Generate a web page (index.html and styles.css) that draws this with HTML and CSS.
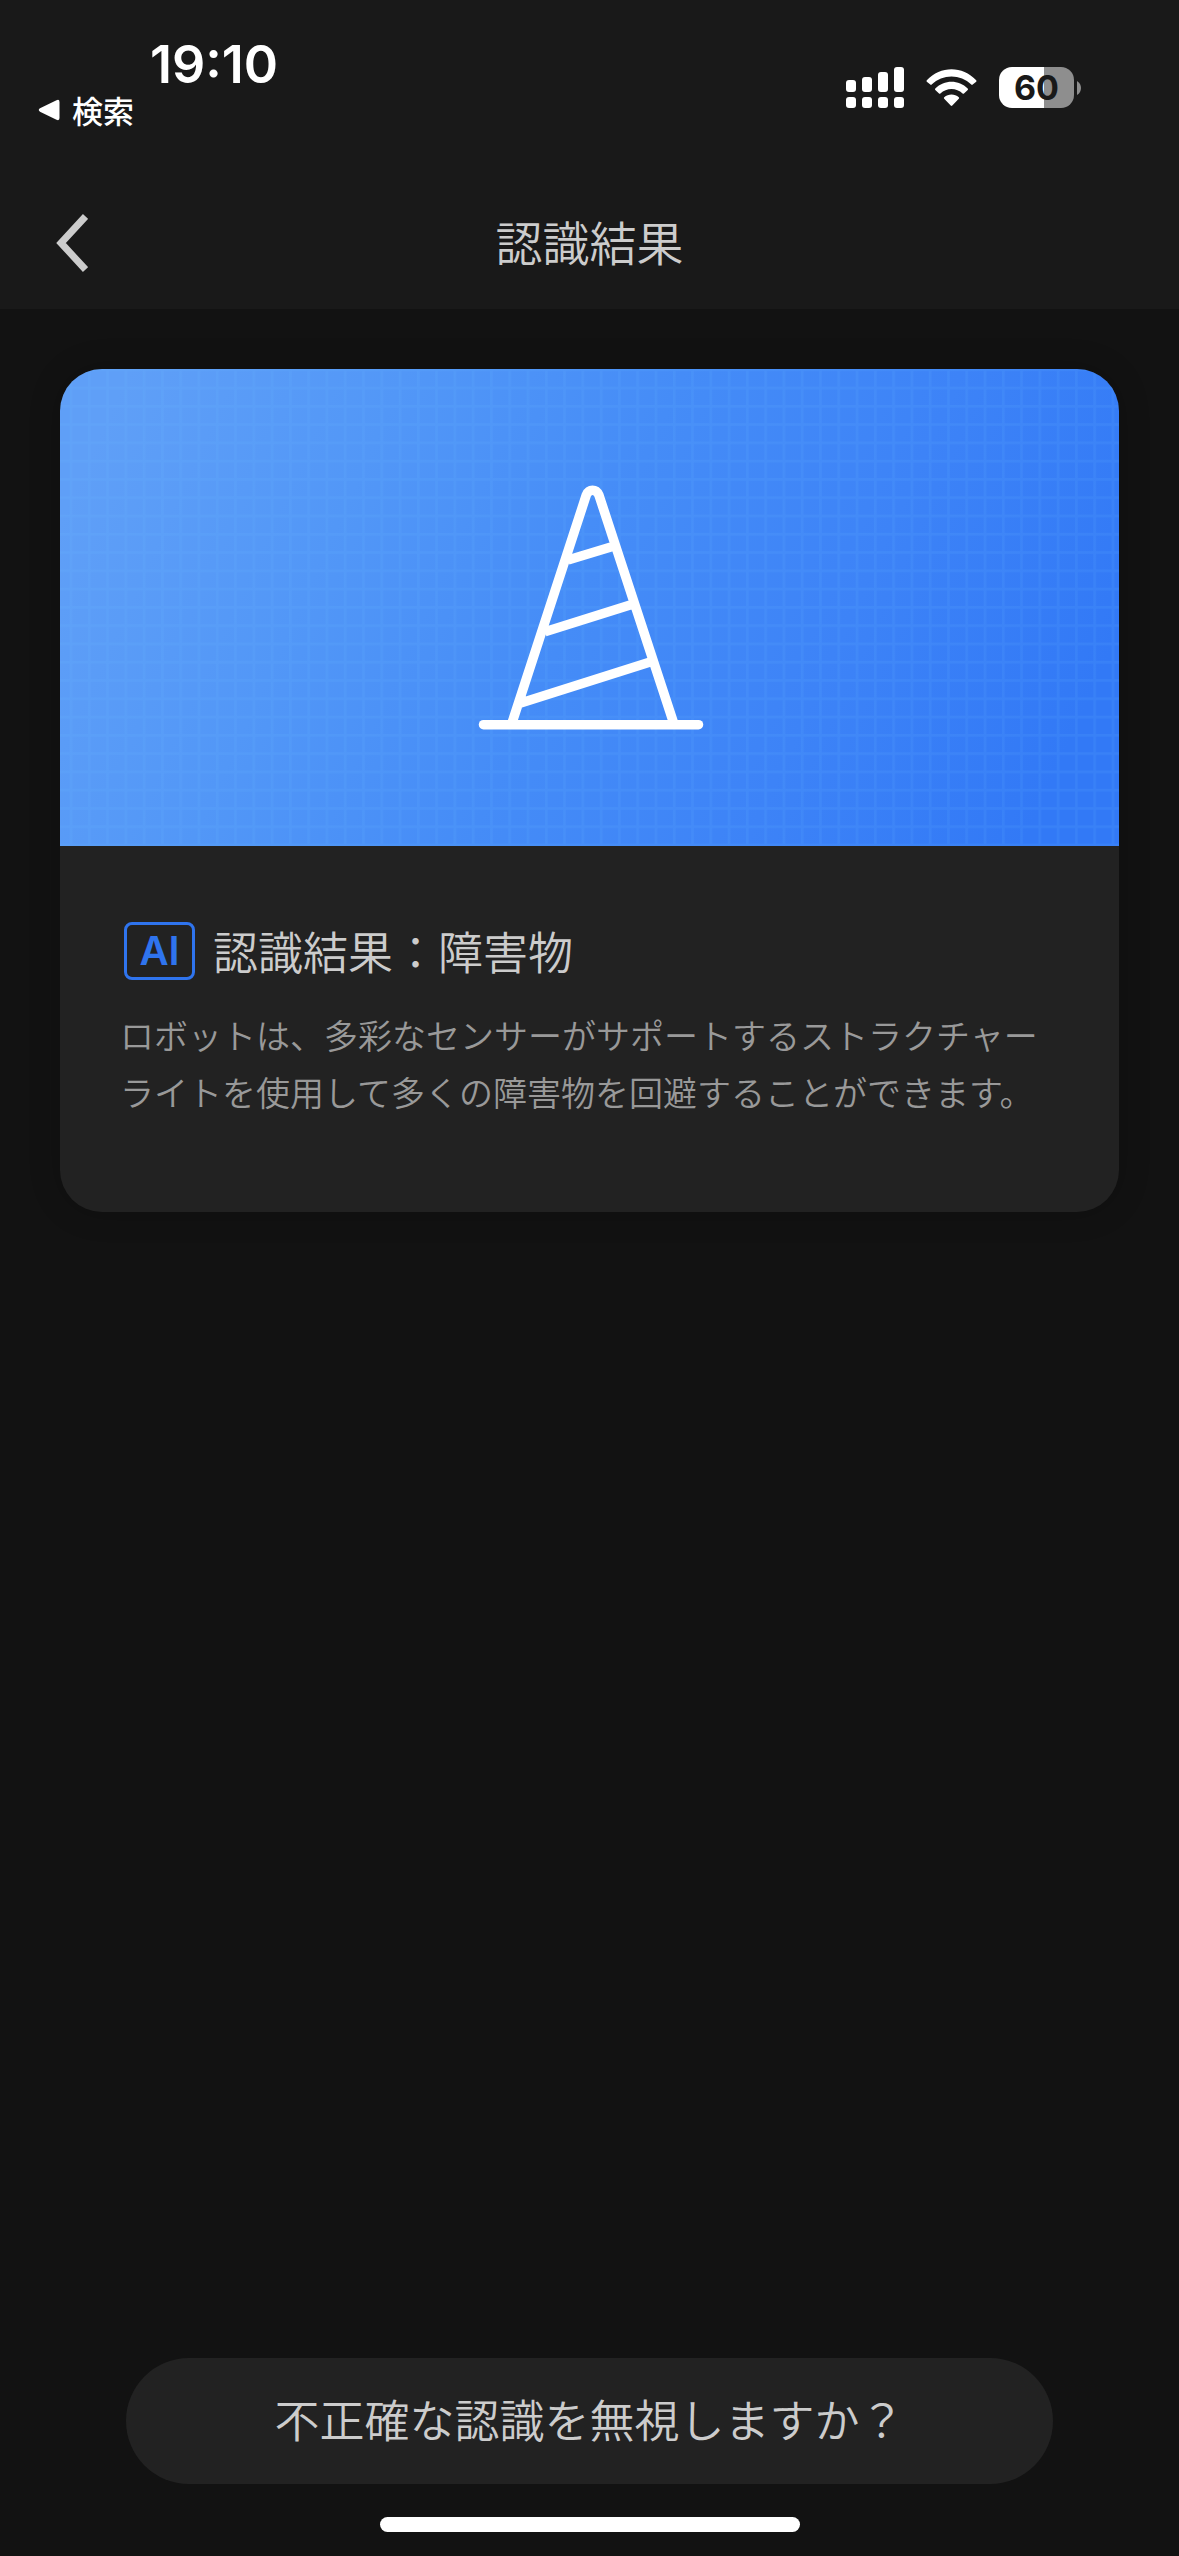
FILE: index.html
```html
<!DOCTYPE html>
<html lang="ja">
<head>
<meta charset="utf-8">
<meta name="viewport" content="width=device-width, initial-scale=1">
<title>認識結果</title>
<link rel="stylesheet" href="styles.css">
</head>
<body>
<header class="top">
  <div class="status">
    <div class="status-left">
      <time class="clock">19:10</time>
      <a class="return" href="#">
        <svg width="22" height="22" viewBox="0 0 22 22" aria-hidden="true"><path d="M2 9.300 18.500 1.200Q21.500 0 21.500 3V19Q21.500 22 18.500 20.800L2 12.700Q-.5 11 2 9.300Z" fill="#fff"/></svg>
        <span>検索</span>
      </a>
    </div>
    <div class="status-right">
      <svg width="58" height="41" viewBox="0 0 58 41" fill="#fff" aria-hidden="true">
        <rect x="0" y="13" width="10" height="12" rx="3"/><rect x="16" y="10" width="10" height="15" rx="3"/><rect x="32" y="5" width="10" height="20" rx="3"/><rect x="48" y="0" width="10" height="25" rx="3"/>
        <rect x="0" y="30" width="10" height="11" rx="3"/><rect x="16" y="30" width="10" height="11" rx="3"/><rect x="32" y="30" width="10" height="11" rx="3"/><rect x="48" y="30" width="10" height="11" rx="3"/>
      </svg>
      <svg width="51" height="41" viewBox="0 0 51 41" fill="#fff" aria-hidden="true">
        <path d="M.8 13.2C14.500-1.500 36.500-1.500 50.200 13.200Q50.800 14 50.200 14.700L46.700 17.600Q46 18.200 45.300 17.600C34.500 6.800 16.500 6.800 5.700 17.600Q5 18.200 4.300 17.600L.8 14.700Q.2 14 .8 13.200Z"/>
        <path d="M9.300 21.600C18.200 12.500 32.800 12.500 41.700 21.600Q42.400 22.400 41.700 23.100L38 26.500Q37.300 27.100 36.600 26.500C30.500 20.500 20.500 20.500 14.400 26.500Q13.700 27.100 13 26.500L9.300 23.100Q8.600 22.400 9.300 21.600Z"/>
        <path d="M18.200 30.200C22.300 26.600 28.700 26.600 32.800 30.200Q33.500 31 32.800 31.700L26.300 38.600Q25.500 39.300 24.700 38.600L18.200 31.700Q17.500 31 18.200 30.200Z"/>
      </svg>
      <div class="battery">
        <span class="battery-level">60</span>
        <svg width="4" height="14" viewBox="0 0 4 14" aria-hidden="true"><path d="M0 0Q4 2.500 4 7T0 14Z" fill="#8e8e8e"/></svg>
      </div>
    </div>
  </div>
  <nav class="bar">
    <button class="back" type="button" aria-label="戻る">
      <svg width="32" height="60" viewBox="0 0 32 60" fill="none" stroke="#ccc" stroke-width="7" aria-hidden="true"><path d="M29.500 3.500 5 30 29.500 56.500"/></svg>
    </button>
    <h1 class="bar-title">認識結果</h1>
  </nav>
</header>

<main class="content">
  <article class="card">
    <svg class="hero" viewBox="0 0 1059 477" role="img" aria-label="障害物">
      <defs>
        <linearGradient id="sky" gradientUnits="userSpaceOnUse" x1="60" y1="20" x2="980" y2="440">
          <stop offset="0" stop-color="#5f9ff7"/><stop offset=".25" stop-color="#5297f7"/><stop offset=".5" stop-color="#458cf7"/><stop offset=".75" stop-color="#3d83f7"/><stop offset="1" stop-color="#3279f6"/>
        </linearGradient>
        <pattern id="grid" patternUnits="userSpaceOnUse" x="1" y="9" width="18.280" height="18.280">
          <path d="M0 10H19M10 0V19" stroke="#6cc0ff" stroke-opacity=".11" stroke-width="2.500"/>
        </pattern>
      </defs>
      <rect width="1059" height="477" fill="url(#sky)"/>
      <rect width="1059" height="477" fill="url(#grid)"/>
      <g fill="none" stroke="#fff" stroke-width="9.500">
        <path d="M423.500 355.700H638.500" stroke-linecap="round"/>
        <path d="M452.300 353 526.300 126Q528.300 121.300 532.500 121.300T538.900 126L613.300 353M508 191 555 176.700M485 262.700 573.300 235M460 334.300 593.300 292"/>
      </g>
    </svg>
    <div class="card-body">
      <div class="result">
        <span class="ai">AI</span>
        <h2 class="result-title">認識結果：障害物</h2>
      </div>
      <p class="desc">ロボットは、多彩なセンサーがサポートするストラクチャーライトを使用して多くの障害物を回避することができます。</p>
    </div>
  </article>
</main>

<footer class="bottom">
  <button class="ignore" type="button">不正確な認識を無視しますか？</button>
  <div class="home"></div>
</footer>
</body>
</html>
```
FILE: styles.css
```css
* {
  box-sizing: border-box;
}

body {
  display: flex;
  flex-direction: column;
  min-height: 100vh;
  margin: 0;
  background: #121212;
  color: #ccc;
  font-family: "Noto Sans CJK JP", sans-serif;
  font-weight: 350;
}

h1,
h2,
p {
  margin: 0;
  font-weight: inherit;
}

button {
  border: 0;
  padding: 0;
  color: inherit;
  font: inherit;
}

svg {
  display: block;
}

.top {
  background: #191919;
}

.status {
  display: flex;
  justify-content: space-between;
  height: 177px;
  padding: 36px 98px 0 38px;
  color: #fff;
}

.clock {
  display: block;
  padding-left: 112px;
  font: 600 52px/58px Inter, sans-serif;
}

.return {
  display: flex;
  align-items: center;
  gap: 12px;
  color: #fff;
  font-size: 31px;
  font-weight: 500;
  line-height: 32px;
  text-decoration: none;
}

.status-right {
  display: flex;
  align-items: center;
  gap: 22px;
  height: 41px;
  margin-top: 31px;
}

.battery {
  display: flex;
  align-items: center;
  gap: 3px;
}

.battery-level {
  width: 75px;
  border-radius: 13px;
  background: linear-gradient(90deg, #fff 60%, #8e8e8e 60%);
  color: #191919;
  font: 700 34px/41px Inter, sans-serif;
  text-align: center;
}

.bar {
  display: grid;
  grid-template-columns: 1fr auto 1fr;
  align-items: center;
  height: 132px;
  padding: 0 56px;
}

.back {
  justify-self: start;
  background: none;
}

.bar-title {
  padding-bottom: 4px;
  font-size: 47px;
  line-height: 128px;
}

.content {
  padding: 60px;
}

.card {
  overflow: hidden;
  border-radius: 42px;
  background: #222;
  box-shadow: 0 0 32px rgba(0, 0, 0, .2);
}

.hero {
  width: 100%;
  height: auto;
}

.card-body {
  padding: 72px 60px 92px;
}

.result {
  display: flex;
  align-items: center;
  gap: 18px;
  margin-bottom: 22px;
}

.ai {
  width: 71px;
  margin-left: 4px;
  border: 3px solid #2f74ee;
  border-radius: 8px;
  color: #2f74ee;
  font: 600 40px/52px Inter, sans-serif;
  text-align: center;
}

.result-title {
  font-size: 45px;
  line-height: 66px;
}

.desc {
  color: #999;
  font-size: 34px;
  line-height: 57px;
}

.bottom {
  display: flex;
  flex-direction: column;
  gap: 33px;
  margin-top: auto;
  padding: 0 126px 24px;
}

.ignore {
  padding-bottom: 4px;
  border-radius: 63px;
  background: #222;
  font-size: 45px;
  line-height: 122px;
}

.home {
  align-self: center;
  width: 420px;
  height: 15px;
  border-radius: 8px;
  background: #fff;
}
```
